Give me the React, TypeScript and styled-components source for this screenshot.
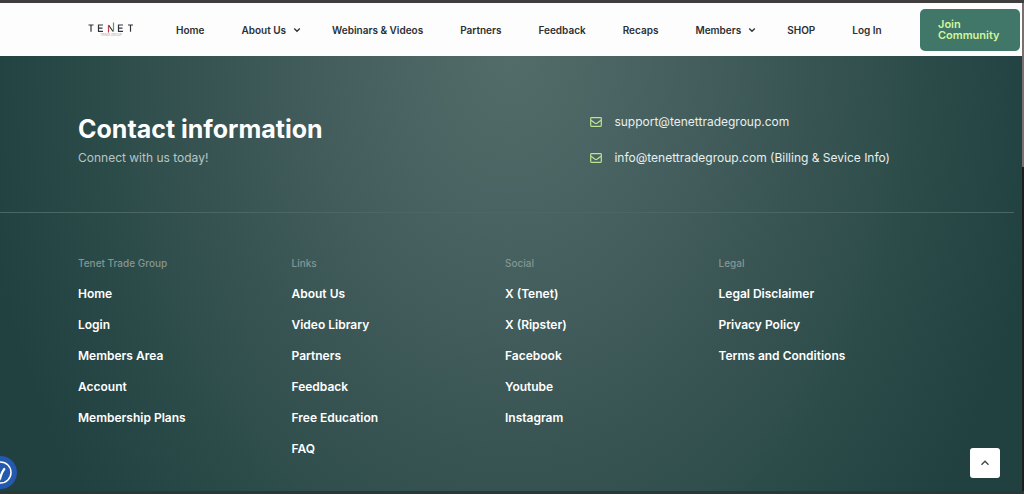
import React from "react";
import styled, { createGlobalStyle } from "styled-components";

const GlobalStyle = createGlobalStyle`
  * { box-sizing: border-box; }
  body { margin: 0; background: #1f3f3f; font-family: Inter, "Liberation Sans", sans-serif; }
  a { color: inherit; text-decoration: none; }
  ul { list-style: none; margin: 0; padding: 0; }
`;

const Frame = styled.div`
  display: flex;
  min-height: 100vh;
  border-top: 3px solid #403d3e;
  border-bottom: 3px solid #2c3838;
`;

const Page = styled.div`
  flex: 1;
  min-width: 0;
  display: flex;
  flex-direction: column;
`;

const ScrollTrack = styled.div`
  width: 2px;
  background: linear-gradient(#77706f 0 164px, #1c1e1e 164px);
`;

const Header = styled.header`
  display: flex;
  align-items: center;
  min-height: 53px;
  padding: 1px 2px 0 88px;
  background: #fdfdfd;
`;

const LogoLink = styled.a`
  display: block;
  flex: none;
  width: 46px;
  height: 16px;
  margin-right: 42px;
`;

const Nav = styled.nav`
  flex: 1;
`;

const NavList = styled.ul`
  display: flex;
  align-items: center;
`;

const NavItem = styled.li<{ $menu?: boolean }>`
  margin-right: ${(p) => (p.$menu ? 31 : 37)}px;
`;

const NavLink = styled.a`
  display: flex;
  align-items: center;
  gap: 7px;
  color: #2b3035;
  font-size: 10px;
  font-weight: 600;
  line-height: 16px;
  white-space: nowrap;
`;

const JoinButton = styled.button`
  flex: none;
  width: 100px;
  height: 42px;
  padding: 0 18px;
  border: 0;
  border-radius: 5px;
  background: #417769;
  color: #d3f59b;
  font: 600 11px/11px Inter, "Liberation Sans", sans-serif;
  text-align: left;
`;

const Footer = styled.footer`
  flex: 1;
  color: #fff;
  background: radial-gradient(ellipse 540px 720px at 50% 0, #526c68 0%, #4a6463 20%, #385452 56%, #2c4c4a 75%, #214141 100%);
`;

const Contact = styled.section`
  display: grid;
  grid-template-columns: 3fr 2fr;
  align-items: start;
  margin-right: 8px;
  padding: 56px 82px 46px 78px;
  border-bottom: 1px solid #4b6665;
`;

const Title = styled.h2`
  margin: 0;
  font-size: 25px;
  font-weight: 700;
  line-height: 34px;
`;

const Subtitle = styled.p`
  margin: 4px 0 0;
  color: #b9c5c4;
  font-size: 12px;
  line-height: 16px;
`;

const MailList = styled.ul`
  display: grid;
  gap: 20px;
  padding-top: 2px;
`;

const MailLink = styled.a`
  display: flex;
  align-items: center;
  gap: 12px;
  color: #e9efee;
  font-size: 12px;
  line-height: 16px;
  white-space: nowrap;
`;

const Columns = styled.div`
  display: grid;
  grid-template-columns: repeat(4, 1fr);
  padding: 42px 90px 30px 78px;
`;

const ColumnTitle = styled.h3`
  margin: 0 0 15px;
  color: #849694;
  font-size: 10px;
  font-weight: 500;
  line-height: 16px;
`;

const LinkList = styled.ul`
  display: grid;
  gap: 15px;
  font-size: 12px;
  font-weight: 600;
  line-height: 16px;
`;

const TopButton = styled.button`
  position: fixed;
  right: 24px;
  bottom: 16px;
  display: grid;
  place-items: center;
  width: 30px;
  height: 30px;
  padding: 0;
  border: 0;
  border-radius: 3px;
  background: #fff;
`;

const AccessButton = styled.button`
  position: fixed;
  left: -16px;
  bottom: 5px;
  width: 33px;
  height: 33px;
  padding: 0;
  border: 0;
  border-radius: 50%;
  background: #2459ad;
`;

const Logo = () => (
  <svg width="46" height="16" viewBox="0 0 46 16" fill="none" aria-hidden="true">
    <path
      d="M.5 3h5M3 3v6.800M15 3h-4.500v6.300H15M10.500 6.200H14.500M20.500 3l4.600 6.500M35 3h-4.500v6.300H35M30.500 6.200H34.500M40 3h5M42.500 3v6.800"
      stroke="#30343a"
      strokeWidth="1.200"
    />
    <path d="M20.500 3v7.500" stroke="#c83e45" strokeWidth="1.200" />
    <path d="M25.500 .5v9" stroke="#46a274" strokeWidth="1.200" />
    <text x="23" y="13.500" textAnchor="middle" fill="#9b9ea1" fontSize="3" fontFamily="Inter, sans-serif">TRADE GROUP</text>
  </svg>
);

const ChevronDown = () => (
  <svg width="8" height="6" viewBox="0 0 8 6" fill="none" stroke="#2b3035" strokeWidth="1.300" aria-hidden="true">
    <path d="M1.200 1.500 4 4.300l2.800-2.800" />
  </svg>
);

const Envelope = () => (
  <svg width="12" height="10" viewBox="0 0 12 10" fill="none" stroke="#bfe391" strokeWidth="1.200" strokeLinejoin="round" aria-hidden="true">
    <rect x=".7" y=".7" width="10.600" height="8.600" rx=".8" />
    <path d="M1 3.200 5.100 6.300q.9.600 1.800 0L11 3.200" />
  </svg>
);

const navItems = [
  { label: "Home" },
  { label: "About Us", menu: true },
  { label: "Webinars & Videos" },
  { label: "Partners" },
  { label: "Feedback" },
  { label: "Recaps" },
  { label: "Members", menu: true },
  { label: "SHOP" },
  { label: "Log In" },
];

const mails = [
  { address: "support@tenettradegroup.com", note: "" },
  { address: "info@tenettradegroup.com", note: " (Billing & Sevice Info)" },
];

const columns = [
  { title: "Tenet Trade Group", links: ["Home", "Login", "Members Area", "Account", "Membership Plans"] },
  { title: "Links", links: ["About Us", "Video Library", "Partners", "Feedback", "Free Education", "FAQ"] },
  { title: "Social", links: ["X (Tenet)", "X (Ripster)", "Facebook", "Youtube", "Instagram"] },
  { title: "Legal", links: ["Legal Disclaimer", "Privacy Policy", "Terms and Conditions"] },
];

export default function App() {
  return (
    <>
      <GlobalStyle />
      <Frame>
        <Page>
          <Header>
            <LogoLink href="#" aria-label="Tenet Trade Group"><Logo /></LogoLink>
            <Nav>
              <NavList>
                {navItems.map((item) => (
                  <NavItem key={item.label} $menu={item.menu}>
                    <NavLink href="#">{item.label}{item.menu && <ChevronDown />}</NavLink>
                  </NavItem>
                ))}
              </NavList>
            </Nav>
            <JoinButton type="button">Join Community</JoinButton>
          </Header>
          <Footer>
            <Contact>
              <div>
                <Title>Contact information</Title>
                <Subtitle>Connect with us today!</Subtitle>
              </div>
              <MailList>
                {mails.map((mail) => (
                  <li key={mail.address}>
                    <MailLink href={`mailto:${mail.address}`}>
                      <Envelope />
                      <span>{mail.address}{mail.note}</span>
                    </MailLink>
                  </li>
                ))}
              </MailList>
            </Contact>
            <Columns>
              {columns.map((column) => (
                <section key={column.title}>
                  <ColumnTitle>{column.title}</ColumnTitle>
                  <LinkList>
                    {column.links.map((link) => (
                      <li key={link}><a href="#">{link}</a></li>
                    ))}
                  </LinkList>
                </section>
              ))}
            </Columns>
          </Footer>
        </Page>
        <ScrollTrack />
      </Frame>
      <TopButton type="button" aria-label="Back to top">
        <svg width="10" height="8" viewBox="0 0 10 8" fill="none" stroke="#444" strokeWidth="1.300" aria-hidden="true">
          <path d="M1.500 5.700 5 2.200l3.500 3.500" />
        </svg>
      </TopButton>
      <AccessButton type="button" aria-label="Accessibility options">
        <svg width="33" height="33" viewBox="0 0 33 33" fill="none" stroke="#fff" strokeLinecap="round" aria-hidden="true">
          <circle cx="16.500" cy="16.500" r="10.500" strokeWidth="1.500" />
          <path d="M12 16.500q3 .5 4.500 4.500 1-4.500 3.800-8" strokeWidth="2.200" />
        </svg>
      </AccessButton>
    </>
  );
}
